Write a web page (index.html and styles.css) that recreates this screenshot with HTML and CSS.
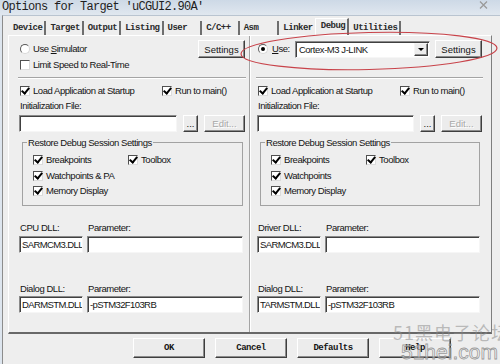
FILE: index.html
```html
<!DOCTYPE html>
<html>
<head>
<meta charset="utf-8">
<title>Options for Target</title>
<link rel="stylesheet" href="styles.css">
</head>
<body>
<div class="win">
	<div class="titlebar">
		<span class="title">Options for Target 'uCGUI2.90A'</span>
		<svg class="close" width="9" height="8" viewBox="0 0 9 8"><path d="M1 0.5 L8 7.5 M8 0.5 L1 7.5" stroke="#9a9a9a" stroke-width="1.3" fill="none"/></svg>
	</div>
	<div class="client">
		<div class="tabs">
			<span class="tab">Device</span>
			<span class="tab">Target</span>
			<span class="tab">Output</span>
			<span class="tab">Listing</span>
			<span class="tab tab-user">User</span>
			<span class="tab tab-cpp">C/C++</span>
			<span class="tab tab-asm">Asm</span>
			<span class="tab">Linker</span>
			<span class="tab sel">Debug</span>
			<span class="tab">Utilities</span>
		</div>
		<div class="panel">
			<div class="col col-l">
				<div class="row-top">
					<label class="opt"><span class="radio"></span><span>Use <u>S</u>imulator</span></label>
					<button class="btn btn-set">Settings</button>
				</div>
				<label class="opt row-limit"><span class="chk"></span>Limit Speed to Real-Time</label>
				<div class="sep"></div>
				<div class="row-load">
					<label class="opt"><span class="chk on"></span>Load Application at Startup</label>
					<label class="opt"><span class="chk on"></span>Run to main()</label>
				</div>
				<div class="lbl lbl-init">Initialization File:</div>
				<div class="row-edit">
					<div class="edit grow"></div>
					<button class="btn btn-dots">...</button>
					<button class="btn btn-edit" disabled>Edit...</button>
				</div>
				<fieldset class="group">
					<legend>Restore Debug Session Settings</legend>
					<div class="group-grid">
						<label class="opt"><span class="chk on"></span>Breakpoints</label>
						<label class="opt"><span class="chk on"></span>Toolbox</label>
						<label class="opt"><span class="chk on"></span>Watchpoints &amp; PA</label>
						<span></span>
						<label class="opt"><span class="chk on"></span>Memory Display</label>
					</div>
				</fieldset>
				<div class="dll-row lbl-cpu"><span>CPU DLL:</span><span>Parameter:</span></div>
				<div class="dll-row edits"><div class="edit">SARMCM3.DLL</div><div class="edit"></div></div>
				<div class="dll-row lbl-dlg"><span>Dialog DLL:</span><span>Parameter:</span></div>
				<div class="dll-row edits2"><div class="edit">DARMSTM.DLL</div><div class="edit">-pSTM32F103RB</div></div>
			</div>
			<div class="col col-r">
				<div class="row-top">
					<label class="opt opt-use"><span class="radio on"></span><span><u>U</u>se:</span></label>
					<div class="combo"><span>Cortex-M3 J-LINK</span><span class="drop"><i class="arrow"></i></span></div>
					<button class="btn btn-set">Settings</button>
				</div>
				<div class="row-limit"></div>
				<div class="sep"></div>
				<div class="row-load">
					<label class="opt"><span class="chk on"></span>Load Application at Startup</label>
					<label class="opt"><span class="chk on"></span>Run to main()</label>
				</div>
				<div class="lbl lbl-init">Initialization File:</div>
				<div class="row-edit">
					<div class="edit grow"></div>
					<button class="btn btn-dots">...</button>
					<button class="btn btn-edit" disabled>Edit...</button>
				</div>
				<fieldset class="group">
					<legend>Restore Debug Session Settings</legend>
					<div class="group-grid">
						<label class="opt"><span class="chk on"></span>Breakpoints</label>
						<label class="opt"><span class="chk on"></span>Toolbox</label>
						<label class="opt"><span class="chk on"></span>Watchpoints</label>
						<span></span>
						<label class="opt"><span class="chk on"></span>Memory Display</label>
					</div>
				</fieldset>
				<div class="dll-row lbl-cpu"><span>Driver DLL:</span><span>Parameter:</span></div>
				<div class="dll-row edits"><div class="edit">SARMCM3.DLL</div><div class="edit"></div></div>
				<div class="dll-row lbl-dlg"><span>Dialog DLL:</span><span>Parameter:</span></div>
				<div class="dll-row edits2"><div class="edit">TARMSTM.DLL</div><div class="edit">-pSTM32F103RB</div></div>
			</div>
		</div>
		<div class="footer">
			<button class="btn btn-dlg">OK</button>
			<button class="btn btn-dlg">Cancel</button>
			<button class="btn btn-dlg">Defaults</button>
			<button class="btn btn-dlg">Help</button>
		</div>
	</div>
	<svg class="ring" width="500" height="364" viewBox="0 0 500 364">
		<ellipse cx="369" cy="51" rx="128" ry="18.5" transform="rotate(-1.3 369 51)" fill="none" stroke="#c8434a" stroke-width="1.2"/>
	</svg>
	<div class="wm-cn">51黑电子论坛</div>
	<div class="wm-en">51hei.com</div>
</div>
</body>
</html>
```

FILE: styles.css
```css
* {
	box-sizing: border-box;
}
body {
	margin: 0;
	font-family: "Liberation Sans", Arial, sans-serif;
	font-size: 9.5px;
	letter-spacing: -0.45px;
	color: #141414;
	background: #dde5ee;
}
.win {
	position: relative;
	width: 500px;
	height: 364px;
	overflow: hidden;
	background: #dde5ee;
}
.titlebar {
	height: 15px;
	display: flex;
	align-items: center;
	justify-content: space-between;
	padding: 0 12px 0 2px;
	background: linear-gradient(#cdd9e6, #e0e7ef);
}
.title {
	font-family: "Liberation Mono", monospace;
	font-size: 12px;
	letter-spacing: -0.7px;
	line-height: 15px;
	color: #1e1e1e;
}
.close {
	margin-top: -5px;
}
.client {
	margin-left: 2px;
	height: 349px;
	border-left: 1px solid #8c8c8c;
	border-top: 1px solid #b9c4d0;
	background: #eeeeee;
}

/* tab strip */
.tabs {
	display: flex;
	align-items: flex-end;
	height: 16px;
	margin: 3px 0 0 6px;
}
.tab {
	height: 14px;
	line-height: 14px;
	padding: 0 2px 0 4px;
	border-right: 2px solid #6e6e6e;
	font-family: "Liberation Mono", monospace;
	font-size: 9px;
	font-weight: bold;
	letter-spacing: -0.5px;
	color: #2a2a2a;
}
.tab-user { padding-right: 13px; }
.tab-cpp { padding-right: 7px; }
.tab-asm { padding-right: 19px; }
.tab.sel {
	position: relative;
	height: 17px;
	line-height: 14px;
	margin-left: -2px;
	padding-left: 5px;
	border-top: 1px solid #fff;
	border-left: 1px solid #fff;
	background: #eeeeee;
}

/* panel */
.panel {
	display: grid;
	grid-template-columns: 241px 1fr;
	width: 484px;
	height: 299px;
	margin-left: 5px;
	border-top: 1px solid #fff;
	border-left: 1px solid #fff;
	border-right: 1px solid #7e7e7e;
	border-bottom: 2px solid #686868;
}
.col {
	display: flex;
	flex-direction: column;
	padding-top: 4px;
}
.col-l {
	padding-left: 10px;
	padding-right: 4px;
	border-right: 1px solid #a4a4a4;
	box-shadow: 1px 0 0 #fff;
}
.col-r {
	padding-left: 7px;
	padding-right: 9px;
}
.opt {
	display: flex;
	align-items: center;
	gap: 3px;
	height: 12px;
	line-height: 12px;
	white-space: nowrap;
}
.lbl {
	height: 12px;
	line-height: 12px;
}
.row-top {
	display: flex;
	align-items: center;
	justify-content: space-between;
	height: 18px;
}
.row-top .opt {
	padding-left: 1px;
}
.opt-use {
	gap: 4px;
}
.row-limit {
	height: 12px;
	margin-top: 1px;
	padding-left: 1px;
}
.sep {
	height: 2px;
	margin: 6px -1px 0;
	border-top: 1px solid #a4a4a4;
	border-bottom: 1px solid #fff;
}
.row-load {
	display: grid;
	grid-template-columns: 142px auto;
	margin-top: 6px;
	padding-left: 1px;
}
.lbl-init {
	margin-top: 3px;
	padding-left: 1px;
}
.row-edit {
	display: flex;
	gap: 6px;
	height: 17px;
	margin-top: 3px;
}
.grow {
	flex: 1;
}

/* controls */
.chk {
	display: inline-flex;
	align-items: center;
	justify-content: center;
	width: 10px;
	height: 10px;
	flex: none;
	background: #fff;
	border: 1px solid;
	border-color: #505050 #dcdcdc #dcdcdc #505050;
}
.chk.on::after {
	content: "";
	width: 3px;
	height: 6px;
	margin-top: -2px;
	border: solid #000;
	border-width: 0 2px 2px 0;
	transform: rotate(40deg);
}
.radio {
	display: inline-flex;
	align-items: center;
	justify-content: center;
	width: 10px;
	height: 10px;
	flex: none;
	border-radius: 50%;
	background: #fff;
	border: 1px solid;
	border-color: #5a5a5a #d8d8d8 #d8d8d8 #5a5a5a;
}
.radio.on::after {
	content: "";
	width: 4px;
	height: 4px;
	border-radius: 50%;
	background: #000;
}
.edit {
	height: 17px;
	padding: 0 1px 0 2px;
	line-height: 15px;
	letter-spacing: -0.6px;
	white-space: nowrap;
	overflow: hidden;
	background: #fff;
	border: 1px solid;
	border-color: #8a8a8a #f6f6f6 #f6f6f6 #8a8a8a;
	box-shadow: inset 1px 1px #404040;
}
.btn {
	display: flex;
	align-items: center;
	justify-content: center;
	padding: 0;
	font: inherit;
	color: #141414;
	background: #ececec;
	border: 1px solid;
	border-color: #fff #3e3e3e #3e3e3e #fff;
	box-shadow: inset -1px -1px #8c8c8c;
}
.btn-set {
	width: 47px;
	height: 18px;
}
.btn-dots {
	width: 15px;
	height: 17px;
	line-height: 10px;
}
.btn-edit {
	width: 41px;
	height: 17px;
}
.btn-edit:disabled {
	color: #a8a8a8;
	text-shadow: 1px 1px #fff;
}
.combo {
	display: flex;
	align-items: center;
	justify-content: space-between;
	width: 135px;
	height: 17px;
	padding: 0 1px 0 3px;
	background: #fff;
	border: 1px solid;
	border-color: #8a8a8a #f6f6f6 #f6f6f6 #8a8a8a;
	box-shadow: inset 1px 1px #404040;
}
.drop {
	display: flex;
	align-items: center;
	justify-content: center;
	width: 14px;
	height: 13px;
	background: #ececec;
	border: 1px solid;
	border-color: #f4f4f4 #3e3e3e #3e3e3e #f4f4f4;
	box-shadow: inset -1px -1px #8c8c8c;
}
.arrow {
	border-top: 3px solid #000;
	border-left: 3px solid transparent;
	border-right: 3px solid transparent;
}

/* group box */
.group {
	margin: 5px 2px 0 3px;
	padding: 6px 0 8px 0;
	border: 1px solid #a2a2a2;
}
.group legend {
	margin-left: 4px;
	padding: 0 1px;
	height: 11px;
	line-height: 11px;
}
.group-grid {
	display: grid;
	grid-template-columns: 95px auto;
	grid-auto-rows: 12px;
	row-gap: 3.5px;
	padding-left: 10px;
}

/* dll rows */
.dll-row {
	display: grid;
	grid-template-columns: 64px 1fr;
	column-gap: 4px;
	margin-right: 2px;
}
.dll-row span {
	height: 12px;
	line-height: 12px;
	padding-left: 1px;
}
.lbl-cpu { margin-top: 16px; }
.edits { margin-top: 2px; }
.lbl-dlg { margin-top: 30px; }
.edits2 { margin-top: 1px; }

/* footer */
.footer {
	display: flex;
	gap: 10px;
	margin-top: 4px;
	padding-left: 130px;
}
.btn-dlg {
	width: 72px;
	height: 20px;
	font-family: "Liberation Mono", monospace;
	font-size: 9px;
	font-weight: bold;
	letter-spacing: -0.5px;
}

/* annotation and watermark drawn over the dialog */
.ring {
	position: absolute;
	left: 0;
	top: 0;
	pointer-events: none;
}
.wm-cn {
	position: absolute;
	left: 393px;
	top: 319px;
	font-family: "Noto Sans CJK SC", sans-serif;
	font-size: 18px;
	letter-spacing: 1px;
	color: rgba(140, 140, 140, 0.55);
	white-space: nowrap;
}
.wm-en {
	position: absolute;
	left: 401px;
	top: 340px;
	font-family: "Liberation Sans", sans-serif;
	font-size: 21px;
	letter-spacing: 0;
	color: rgba(255, 255, 255, 0.45);
	-webkit-text-stroke: 0.8px rgba(130, 130, 130, 0.8);
	white-space: nowrap;
}
```
